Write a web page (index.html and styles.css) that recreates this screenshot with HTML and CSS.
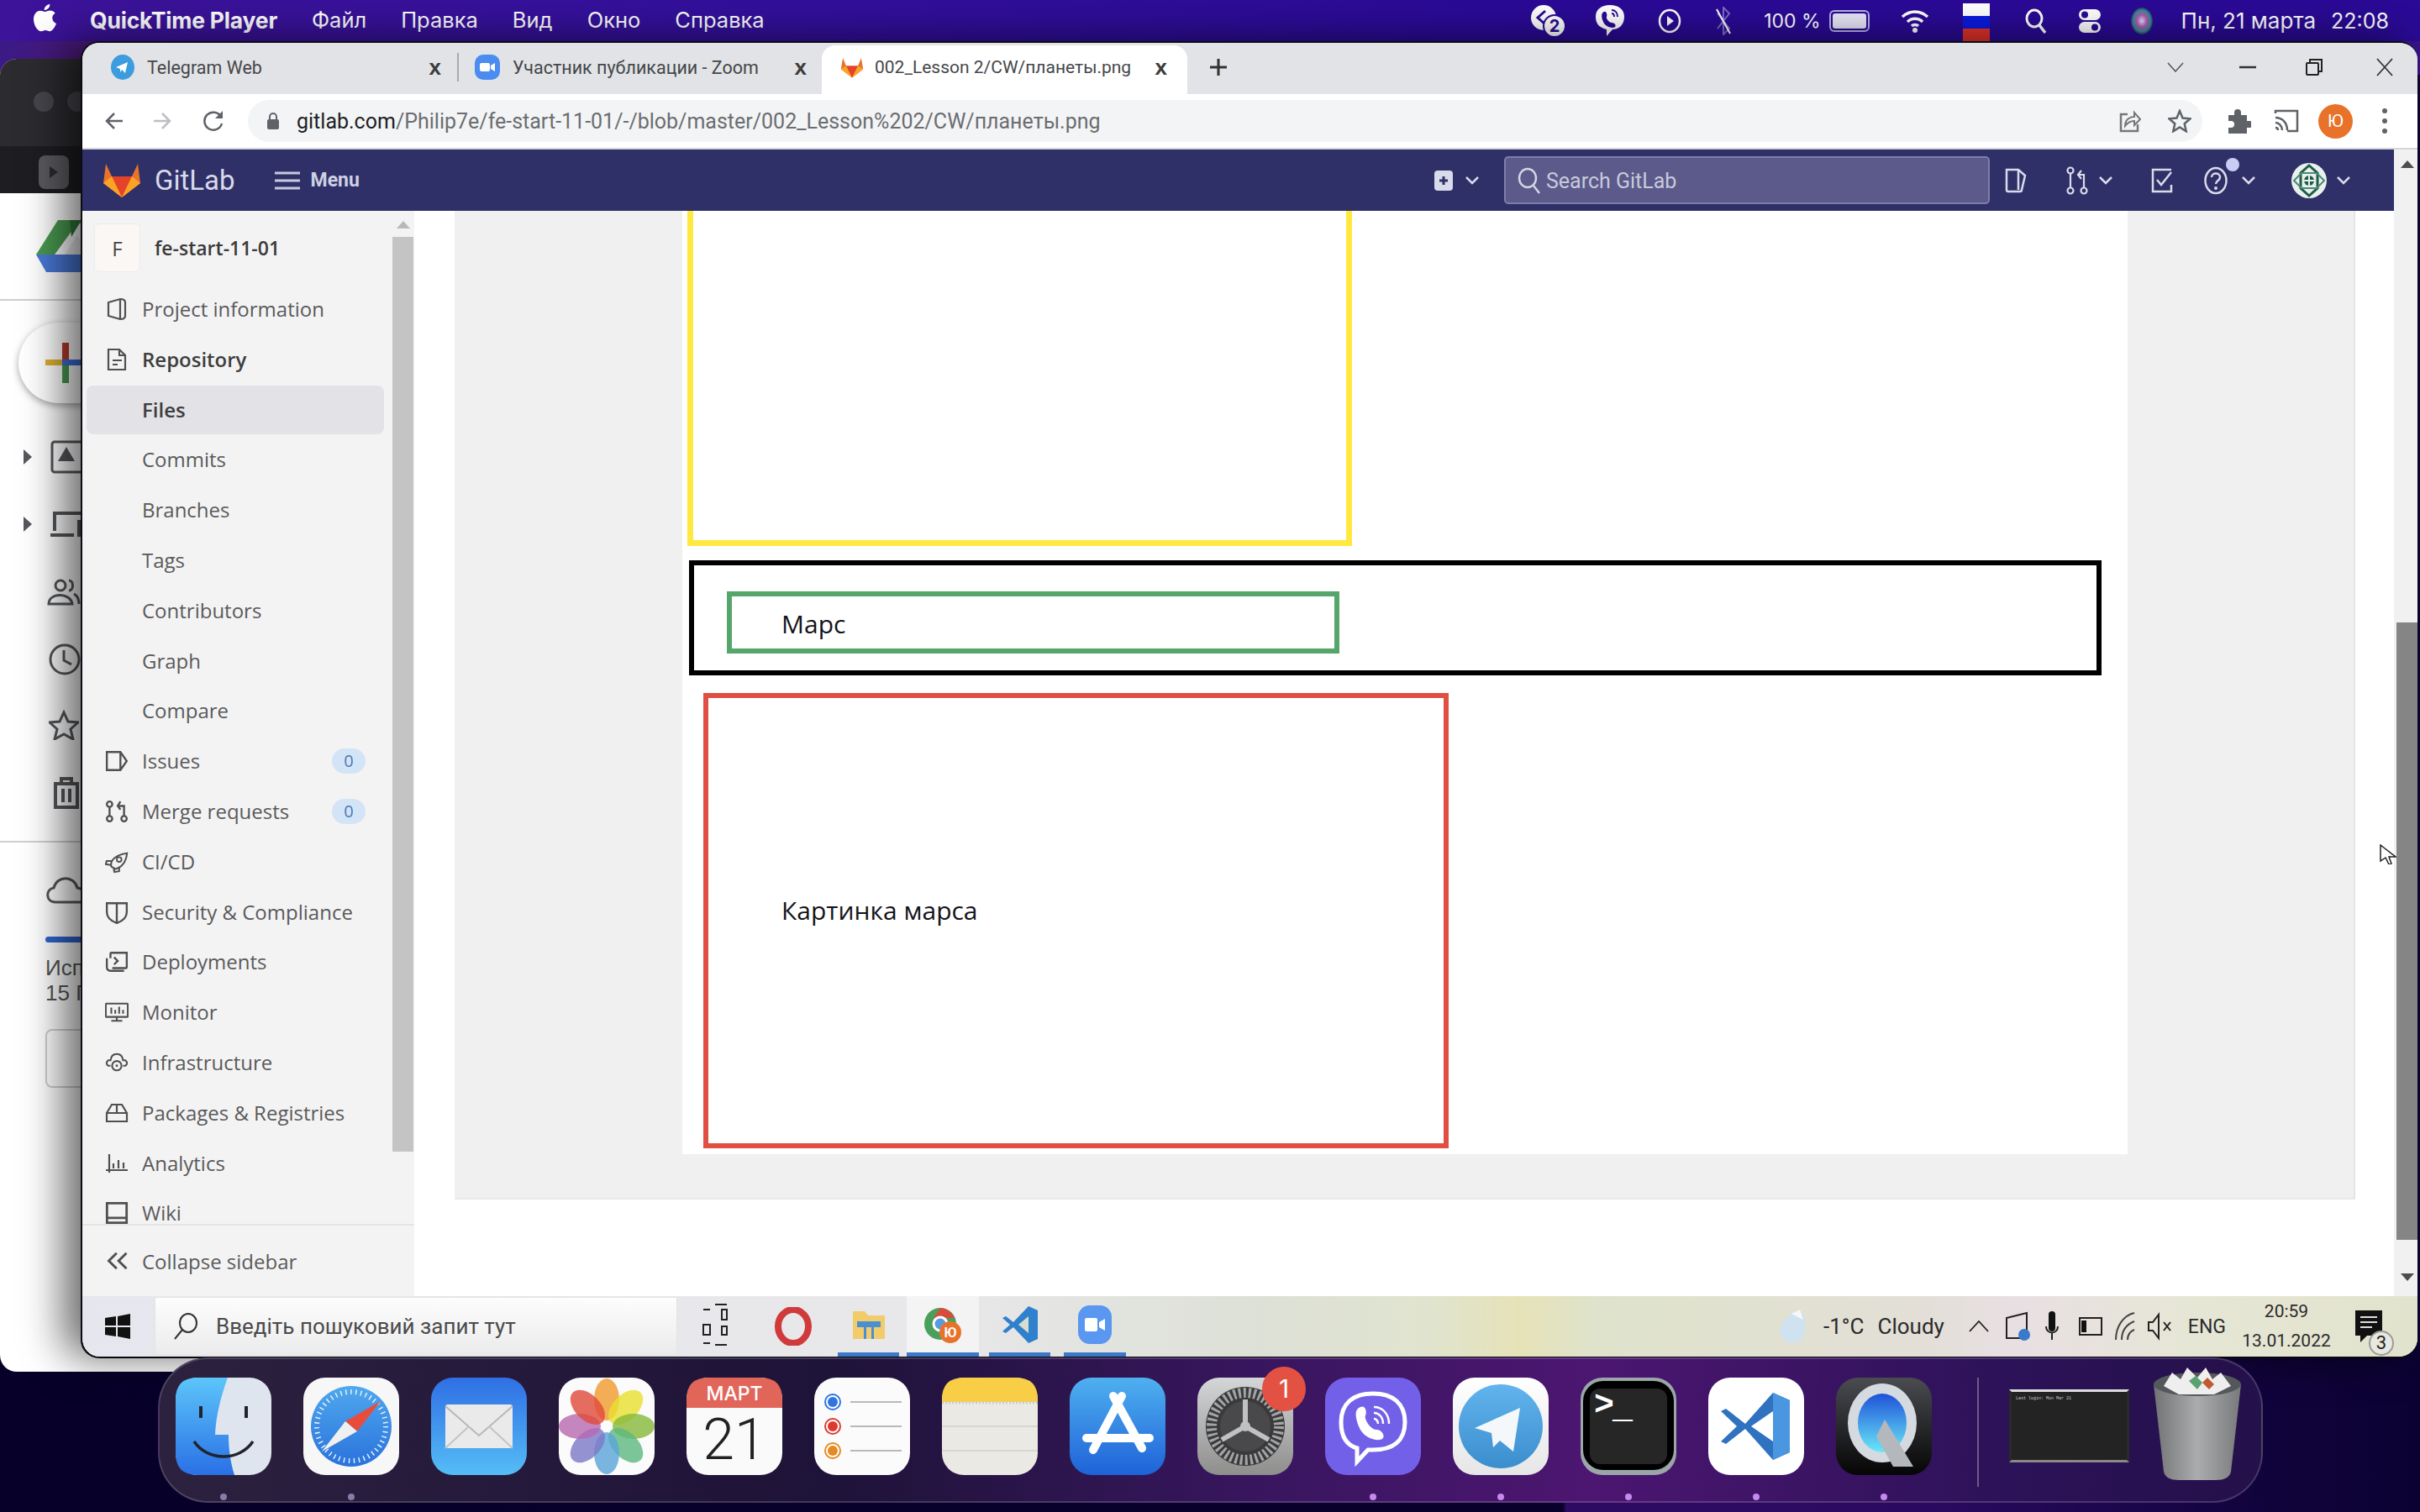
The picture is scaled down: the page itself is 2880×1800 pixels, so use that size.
FILE: index.html
```html
<!DOCTYPE html>
<html lang="en">
<head>
    <meta charset="UTF-8">
    <title>GitLab - QuickTime</title>
    <link rel="stylesheet" href="styles.css">
</head>
<body>

    <div class="menubar">
        <svg class="apple" viewBox="0 0 28 34"><path d="M20 0c.4 3.500-2.800 7.500-6.800 7.200C12.800 3.800 16.200.4 20 0zM14 9.200c1.800 0 3.600-1.500 6.400-1.500 2.300 0 4.700 1.200 6.200 3.400-5.300 3-4.400 10.500 1.400 12.700-1.500 4-4.700 9.600-8 9.600-2 0-3-1.300-5.300-1.300s-3.500 1.300-5.400 1.300C4.700 33.400 0 25.500 0 18.500 0 12 4 8 8.200 8c2.500 0 4.200 1.200 5.800 1.200z" fill="#fff"/></svg>
        <span class="menu-app">QuickTime Player</span>
        <span class="menu-item">Файл</span>
        <span class="menu-item">Правка</span>
        <span class="menu-item">Вид</span>
        <span class="menu-item">Окно</span>
        <span class="menu-item">Справка</span>

        <div class="menu-right">
            <svg class="st-group" width="44" height="40" viewBox="0 0 44 40"><circle cx="17" cy="16" r="15" fill="#fff"/><path d="M19 8l-9 8 9 8" stroke="#2a0a96" stroke-width="3" fill="none"/><circle cx="30" cy="26" r="13" fill="#fff" stroke="#2a0a96" stroke-width="2"/><text x="30" y="33" class="st-num">2</text></svg>
            <svg class="st-viber" width="36" height="40" viewBox="0 0 36 40"><path d="M18 1c10 0 17 5 17 14s-6 15-14 15l-7 8v-8C6 28 1 24 1 15 1 6 8 1 18 1z" fill="#fff"/><path d="M11 9c3-1 4 4 3 6s3 7 6 7 6 3 4 5-11 1-14-6-2-11 1-12z" fill="#2a0a96"/><path d="M20 7c4 0 7 3 7 8M20 11c2 0 3 2 3 4" stroke="#2a0a96" stroke-width="2" fill="none"/></svg>
            <svg class="st-play" width="28" height="40" viewBox="0 0 28 40"><ellipse cx="14" cy="20" rx="12" ry="13" fill="none" stroke="#fff" stroke-width="2.500"/><path d="M11 14l8 6-8 6z" fill="#fff"/></svg>
            <svg class="st-bt" width="22" height="34" viewBox="0 0 22 34"><path d="M4 8l14 18-7 7V1l7 7L4 26" fill="none" stroke="#7b6cc4" stroke-width="2"/><path d="M3 3l16 29" stroke="#fff" stroke-width="2"/></svg>
            <span class="st-percent">100 %</span>
            <div class="st-battery"><div class="st-battery-fill"></div></div>
            <svg class="st-wifi" width="34" height="28" viewBox="0 0 34 28"><path d="M2 9c9-8 21-8 30 0M8 15c5-5 13-5 18 0M13 20c2-2 6-2 8 0" fill="none" stroke="#fff" stroke-width="3.500"/><circle cx="17" cy="25" r="3" fill="#fff"/></svg>
            <div class="st-flag"><i class="flag-w"></i><i class="flag-b"></i><i class="flag-r"></i></div>
            <svg class="st-search" width="28" height="30" viewBox="0 0 28 30"><ellipse cx="12" cy="12" rx="9" ry="10" fill="none" stroke="#fff" stroke-width="3"/><path d="M18 20l7 9" stroke="#fff" stroke-width="3.500"/></svg>
            <svg class="st-control" width="28" height="30" viewBox="0 0 28 30"><rect x="1" y="1" width="26" height="13" rx="6.500" fill="#fff"/><circle cx="8" cy="7.500" r="4" fill="#2a0a96"/><rect x="1" y="16" width="26" height="13" rx="6.500" fill="#fff"/><circle cx="20" cy="22.500" r="4" fill="#2a0a96"/></svg>
            <svg class="st-siri" width="28" height="34" viewBox="0 0 28 34"><defs><radialGradient id="siri"><stop offset="0" stop-color="#e0e0ff"/><stop offset=".45" stop-color="#b05ab0"/><stop offset=".8" stop-color="#3a8a9a"/><stop offset="1" stop-color="#2a3a6a"/></radialGradient></defs><ellipse cx="14" cy="17" rx="13" ry="16" fill="url(#siri)"/></svg>
            <span class="st-date">Пн, 21 марта</span>
            <span class="st-time">22:08</span>
        </div>
    </div>

    <div class="drive-window">
        <div class="drive-title">
            <i class="light"></i><i class="light"></i>
        </div>
        <div class="drive-tabbar">
            <div class="drive-qt"><i></i></div>
        </div>
        <div class="drive-body">
            <svg class="drive-logo" width="100" height="62" viewBox="0 0 100 62"><path d="M50 0h24l26 41H74z" fill="#e0a82c"/><path d="M26 0h26L22 41H0z" fill="#4a9a50"/><path d="M40 0h14L42 20z" fill="#2f7a3c"/><path d="M0 41h100l-12 21H12z" fill="#4a78d8"/><path d="M34 41h30L49 18z" fill="#eee"/></svg>
            <div class="drive-sep"></div>
            <div class="drive-new">
                <svg width="60" height="48" viewBox="0 0 60 48"><path d="M20 0h8v20h-8z" fill="#b83a2c"/><path d="M0 20h20v7H0z" fill="#e0b030"/><path d="M20 20h40v7H20z" fill="#3d6fd8"/><path d="M20 27h8v21h-8z" fill="#4a9a50"/></svg>
            </div>
            <div class="drive-row">
                <svg class="drive-arrow" width="10" height="18" viewBox="0 0 10 18"><path d="M0 0l10 9-10 9z" fill="#55585c"/></svg>
                <svg class="drive-icon" width="42" height="40" viewBox="0 0 42 40"><rect x="2" y="2" width="50" height="36" rx="3" fill="none" stroke="#55585c" stroke-width="3"/><path d="M19 8l10 17H9z" fill="#55585c"/></svg>
            </div>
            <div class="drive-row drive-row-laptop">
                <svg class="drive-arrow" width="10" height="18" viewBox="0 0 10 18"><path d="M0 0l10 9-10 9z" fill="#55585c"/></svg>
                <svg class="drive-icon" width="42" height="32" viewBox="0 0 42 32"><path d="M5 24V3h34M0 29h28M34 13h12v16H34z" fill="none" stroke="#55585c" stroke-width="4"/></svg>
            </div>
            <svg class="drive-plain drive-people" width="40" height="32" viewBox="0 0 40 32"><circle cx="16" cy="8" r="6" fill="none" stroke="#55585c" stroke-width="3"/><path d="M2 30c0-14 26-14 28 0z" fill="none" stroke="#55585c" stroke-width="3"/><path d="M26 2c6 0 6 12 0 12M32 18c4 2 6 6 6 12" fill="none" stroke="#55585c" stroke-width="3"/></svg>
            <svg class="drive-plain drive-clock" width="42" height="38" viewBox="0 0 42 38"><circle cx="19" cy="19" r="17" fill="none" stroke="#55585c" stroke-width="3"/><path d="M18 8v12l9 5" fill="none" stroke="#55585c" stroke-width="3"/></svg>
            <svg class="drive-plain drive-star" width="36" height="36" viewBox="0 0 36 36"><path d="M18 3l5 11 12 1-9 8 3 12-11-6-11 6 3-12-9-8 12-1z" fill="none" stroke="#55585c" stroke-width="3"/></svg>
            <svg class="drive-plain drive-trash" width="32" height="38" viewBox="0 0 32 38"><path d="M1 8h30M10 8V2h12v6M3 8v28h26V8M12 14v16M20 14v16" fill="none" stroke="#55585c" stroke-width="4"/></svg>
            <div class="drive-sep drive-sep2"></div>
            <svg class="drive-plain drive-cloud" width="42" height="34" viewBox="0 0 42 34"><path d="M12 32C0 32 0 16 10 15 14 0 34 0 38 15c8 1 12 8 10 17z" fill="none" stroke="#55585c" stroke-width="3"/></svg>
            <div class="drive-bar"></div>
            <div class="drive-usage">Исп<br>15 Г</div>
            <div class="drive-btn"></div>
        </div>
    </div>

    <div class="browser">
        <div class="tabstrip">
            <div class="tab tab-first">
                <svg class="fav" width="28" height="30" viewBox="0 0 28 30"><ellipse cx="14" cy="15" rx="14" ry="15" fill="#3d9be0"/><path d="M6 15l14-6-3 13-4-4-2 3v-4z" fill="#fff"/></svg>
                <span class="tab-title">Telegram Web</span>
                <span class="tab-x">x</span>
            </div>
            <div class="tab tab-second">
                <svg class="fav" width="30" height="30" viewBox="0 0 30 30"><rect width="30" height="30" rx="10" fill="#4a8cf0"/><rect x="6" y="10" width="12" height="10" rx="2" fill="#fff"/><path d="M19 13l5-3v10l-5-3z" fill="#fff"/></svg>
                <span class="tab-title">Участник публикации - Zoom</span>
                <span class="tab-x">x</span>
            </div>
            <div class="tab tab-active">
                <svg class="fav" width="28" height="28" viewBox="0 0 36 34"><path d="M18 33L1 20l3-17 5 12h18l5-12 3 17z" fill="#e8742c"/><path d="M18 33L9 15h18z" fill="#e24329"/><path d="M1 20l8-5 9 18zM35 20l-8-5-9 18z" fill="#fca326"/></svg>
                <span class="tab-title tab-title-active">002_Lesson 2/CW/планеты.png</span>
                <span class="tab-x">x</span>
            </div>
            <svg class="tab-plus" width="24" height="24" viewBox="0 0 24 24"><path d="M12 2v20M2 12h20" stroke="#333" stroke-width="3"/></svg>
            <div class="win-controls">
                <svg class="win-chevron" width="20" height="12" viewBox="0 0 20 12"><path d="M1 1l9 10 9-10" fill="none" stroke="#555" stroke-width="1.500"/></svg>
                <svg class="win-min" width="20" height="4" viewBox="0 0 20 4"><path d="M0 2h20" stroke="#333" stroke-width="2.500"/></svg>
                <svg class="win-restore" width="20" height="20" viewBox="0 0 20 20"><rect x="1" y="5" width="14" height="14" rx="1" fill="none" stroke="#222" stroke-width="2"/><path d="M5 5V1h14v14h-4" fill="none" stroke="#222" stroke-width="2"/></svg>
                <svg class="win-close" width="22" height="22" viewBox="0 0 22 22"><path d="M2 1l18 20M20 1L2 21" stroke="#333" stroke-width="1.800"/></svg>
            </div>
        </div>

        <div class="toolbar">
            <svg class="tb-back" width="22" height="22" viewBox="0 0 22 22"><path d="M21 11H3M11 2l-9 9 9 9" fill="none" stroke="#5f6368" stroke-width="2.500"/></svg>
            <svg class="tb-forward" width="22" height="22" viewBox="0 0 22 22"><path d="M1 11h18M11 2l9 9-9 9" fill="none" stroke="#bcbec2" stroke-width="2.500"/></svg>
            <svg class="tb-reload" width="26" height="26" viewBox="0 0 26 26"><path d="M22 8a10.500 10.500 0 1 0 1 8" fill="none" stroke="#5f6368" stroke-width="2.500"/><path d="M24 1v9h-9z" fill="#5f6368"/></svg>
            <div class="omnibox">
                <svg class="lock" width="14" height="20" viewBox="0 0 14 20"><rect y="8" width="14" height="12" rx="2" fill="#5f6368"/><path d="M3 9V5a4 4 0 0 1 8 0v4" fill="none" stroke="#5f6368" stroke-width="2"/></svg>
                <span class="url"><b class="url-host">gitlab.com</b>/Philip7e/fe-start-11-01/-/blob/master/002_Lesson%202/CW/планеты.png</span>
                <svg class="om-share" width="26" height="30" viewBox="0 0 26 30"><path d="M10 7H2v20h20v-8" fill="none" stroke="#777" stroke-width="2.500"/><path d="M7 21c0-8 6-11 11-11V5l7 8-7 7v-5c-5 0-8 2-11 6z" fill="none" stroke="#777" stroke-width="2"/></svg>
                <svg class="om-star" width="28" height="28" viewBox="0 0 28 28"><path d="M14 2l3.500 8.500 9 .8-6.800 6 2 9L14 21.500 6.300 26.300l2-9-6.800-6 9-.8z" fill="none" stroke="#5f6368" stroke-width="2.500"/></svg>
            </div>
            <svg class="tb-ext" width="30" height="30" viewBox="0 0 30 30"><path d="M3 8h7V5a4 4 0 0 1 8 0v3h7v7h3a4 4 0 0 1 0 8h-3v7H3v-7h3a4 4 0 0 0 0-8H3z" fill="#5f6368"/></svg>
            <svg class="tb-cast" width="30" height="28" viewBox="0 0 30 28"><path d="M2 5V2h26v24H16" fill="none" stroke="#5f6368" stroke-width="2.500"/><path d="M2 10c8 0 14 6 14 15M2 16c4 0 8 4 8 9M2 22c2 0 3 1 3 3" fill="none" stroke="#5f6368" stroke-width="2.500"/></svg>
            <div class="tb-avatar">Ю</div>
            <div class="tb-dots"><i></i><i></i><i></i></div>
        </div>

        <div class="page">
            <div class="page-main">
                <div class="gl-nav">
                    <svg class="gl-logo" width="46" height="42" viewBox="0 0 46 42"><path d="M23 41L1 24 4 1l7 15h24l7-15 3 23z" fill="#e8742c"/><path d="M23 41L11 16h24z" fill="#e24329"/><path d="M1 24l10-8 12 25zM45 24l-10-8-12 25z" fill="#fca326"/></svg>
                    <span class="gl-name">GitLab</span>
                    <svg class="gl-burger" width="30" height="22" viewBox="0 0 30 22"><path d="M0 2h30M0 11h30M0 20h30" stroke="#c8c9dd" stroke-width="3"/></svg>
                    <span class="gl-menu">Menu</span>

                    <div class="gl-right">
                        <svg class="gl-add" width="22" height="24" viewBox="0 0 22 24"><rect width="22" height="24" rx="4" fill="#d9daea"/><path d="M11 7v10M6 12h10" stroke="#2f3068" stroke-width="3"/></svg>
                        <svg class="gl-chev gl-chev-add" width="16" height="10" viewBox="0 0 16 10"><path d="M1 1l7 7 7-7" fill="none" stroke="#d9daea" stroke-width="2.500"/></svg>
                        <div class="gl-search">
                            <svg width="28" height="32" viewBox="0 0 28 32"><ellipse cx="12" cy="13" rx="10" ry="11" fill="none" stroke="#d5d5e4" stroke-width="2.500"/><path d="M19 22l7 9" stroke="#d5d5e4" stroke-width="2.500"/></svg>
                            <span>Search GitLab</span>
                        </div>
                        <svg class="gl-issues" width="26" height="32" viewBox="0 0 26 32"><path d="M2 3h14l8 7-4 17q0 2-2 2H4q-2 0-2-2z" fill="none" stroke="#d9daea" stroke-width="2.500"/><path d="M16 3v24" stroke="#d9daea" stroke-width="2.500"/></svg>
                        <svg class="gl-mr" width="26" height="34" viewBox="0 0 26 34"><circle cx="5" cy="5" r="3.500" fill="none" stroke="#d9daea" stroke-width="2.200"/><circle cx="5" cy="29" r="3.500" fill="none" stroke="#d9daea" stroke-width="2.200"/><circle cx="21" cy="29" r="3.500" fill="none" stroke="#d9daea" stroke-width="2.200"/><path d="M5 9v16M21 25V10h-6M18 5l-4 5 4 5" fill="none" stroke="#d9daea" stroke-width="2.200"/></svg>
                        <svg class="gl-chev gl-chev-mr" width="16" height="10" viewBox="0 0 16 10"><path d="M1 1l7 7 7-7" fill="none" stroke="#d9daea" stroke-width="2.500"/></svg>
                        <svg class="gl-todo" width="26" height="32" viewBox="0 0 26 32"><path d="M24 3H2v26h22v-8" fill="none" stroke="#d9daea" stroke-width="2.500"/><path d="M7 15l5 6 12-15" fill="none" stroke="#d9daea" stroke-width="2.500"/></svg>
                        <div class="gl-help">
                            <svg width="28" height="36" viewBox="0 0 28 36"><ellipse cx="14" cy="18" rx="12.500" ry="15" fill="none" stroke="#d9daea" stroke-width="2.500"/><path d="M9 14c0-6 10-6 10 0 0 4-5 4-5 8" fill="none" stroke="#d9daea" stroke-width="2.500"/><circle cx="14" cy="27" r="2" fill="#d9daea"/></svg>
                            <i class="gl-help-dot"></i>
                        </div>
                        <svg class="gl-chev gl-chev-help" width="16" height="10" viewBox="0 0 16 10"><path d="M1 1l7 7 7-7" fill="none" stroke="#d9daea" stroke-width="2.500"/></svg>
                        <svg class="gl-avatar" width="42" height="42" viewBox="0 0 42 42"><circle cx="21" cy="21" r="21" fill="#eaf1ec"/><path d="M21 3l10 9v18l-10 9-10-9V12z" fill="none" stroke="#1f5c48" stroke-width="3"/><path d="M3 21l9-9h18l9 9-9 9H12z" fill="none" stroke="#4a8a78" stroke-width="2"/><circle cx="21" cy="21" r="6" fill="#1f5c48"/><path d="M21 15v12M15 21h12" stroke="#eaf1ec" stroke-width="2"/></svg>
                        <svg class="gl-chev gl-chev-user" width="16" height="10" viewBox="0 0 16 10"><path d="M1 1l7 7 7-7" fill="none" stroke="#d9daea" stroke-width="2.500"/></svg>
                    </div>
                </div>

                <div class="gl-body">
                    <div class="sidebar">
                        <div class="side-scroll">
                            <div class="side-nav">
                                <div class="side-project">
                                    <div class="project-avatar">F</div>
                                    <span class="project-name">fe-start-11-01</span>
                                </div>
                                <ul class="side-list">
                                    <li class="side-item">
                                        <svg class="side-icon" viewBox="0 0 24 28"><path d="M2 6l14-4q6 0 6 4v16q0 4-6 4L2 22zM16 2v24" fill="none" stroke="#505050" stroke-width="2.200"/></svg>
                                        <span>Project information</span>
                                    </li>
                                    <li class="side-item side-bold">
                                        <svg class="side-icon" viewBox="0 0 24 28"><path d="M2 2h13l7 7v17H2zM15 2v7h7M7 15h11M7 20h6" fill="none" stroke="#505050" stroke-width="2.200"/></svg>
                                        <span>Repository</span>
                                    </li>
                                    <li class="side-item side-bold side-active"><span>Files</span></li>
                                    <li class="side-item"><span>Commits</span></li>
                                    <li class="side-item"><span>Branches</span></li>
                                    <li class="side-item"><span>Tags</span></li>
                                    <li class="side-item"><span>Contributors</span></li>
                                    <li class="side-item"><span>Graph</span></li>
                                    <li class="side-item"><span>Compare</span></li>
                                    <li class="side-item">
                                        <svg class="side-icon" viewBox="0 0 26 24"><path d="M2 2h15l7 10-7 10H2zM17 2v20" fill="none" stroke="#505050" stroke-width="2.200"/></svg>
                                        <span>Issues</span>
                                        <em class="side-count">0</em>
                                    </li>
                                    <li class="side-item">
                                        <svg class="side-icon" viewBox="0 0 26 26"><circle cx="5" cy="5" r="3" fill="none" stroke="#505050" stroke-width="2.200"/><circle cx="5" cy="21" r="3" fill="none" stroke="#505050" stroke-width="2.200"/><circle cx="21" cy="21" r="3" fill="none" stroke="#505050" stroke-width="2.200"/><path d="M5 8v10M21 18V7h-6M17 2l-3 5 3 4" fill="none" stroke="#505050" stroke-width="2.200"/></svg>
                                        <span>Merge requests</span>
                                        <em class="side-count">0</em>
                                    </li>
                                    <li class="side-item">
                                        <svg class="side-icon" viewBox="0 0 30 28"><path d="M8 20c-2-8 6-15 20-17-1 12-8 19-15 20zM8 13H2l-1 4 6 1M18 20v6l-6 1-1-4" fill="none" stroke="#505050" stroke-width="2.200"/><circle cx="18" cy="11" r="3" fill="none" stroke="#505050" stroke-width="2"/></svg>
                                        <span>CI/CD</span>
                                    </li>
                                    <li class="side-item">
                                        <svg class="side-icon" viewBox="0 0 26 26"><path d="M2 3h22v10q0 8-11 12Q2 21 2 13zM13 3v22" fill="none" stroke="#505050" stroke-width="2.200"/></svg>
                                        <span>Security &amp; Compliance</span>
                                    </li>
                                    <li class="side-item">
                                        <svg class="side-icon" viewBox="0 0 26 24"><path d="M6 8V3q0-1 1-1h17v16q0 1-1 1H8M2 8v10q0 4 5 4h14" fill="none" stroke="#505050" stroke-width="2.200"/><path d="M10 7l4 4-4 4" fill="none" stroke="#505050" stroke-width="2.200"/></svg>
                                        <span>Deployments</span>
                                    </li>
                                    <li class="side-item">
                                        <svg class="side-icon" viewBox="0 0 30 26"><rect x="1" y="2" width="28" height="17" rx="1" fill="none" stroke="#505050" stroke-width="2.200"/><path d="M8 24h14M15 19v5M8 7v8M13 10v5M18 6v9M23 10v5" fill="none" stroke="#505050" stroke-width="2.200"/></svg>
                                        <span>Monitor</span>
                                    </li>
                                    <li class="side-item">
                                        <svg class="side-icon" viewBox="0 0 30 26"><path d="M7 17H4q-4-3 0-7h3Q8 2 15 2t8 8h3q4 4 0 7h-3" fill="none" stroke="#505050" stroke-width="2.200"/><circle cx="15" cy="17" r="6" fill="none" stroke="#505050" stroke-width="2.200"/><circle cx="15" cy="17" r="1.500" fill="#505050"/></svg>
                                        <span>Infrastructure</span>
                                    </li>
                                    <li class="side-item">
                                        <svg class="side-icon" viewBox="0 0 28 24"><path d="M2 12L8 2h12l6 10v10H2zM2 12h24M14 2v10" fill="none" stroke="#505050" stroke-width="2.200"/></svg>
                                        <span>Packages &amp; Registries</span>
                                    </li>
                                    <li class="side-item">
                                        <svg class="side-icon" viewBox="0 0 28 24"><path d="M5 1v22M1 20h26M10 12v6M16 8v10M22 11v7" fill="none" stroke="#505050" stroke-width="2.200"/></svg>
                                        <span>Analytics</span>
                                    </li>
                                    <li class="side-item">
                                        <svg class="side-icon" viewBox="0 0 24 24"><path d="M2 22V2h20v20zM2 17h20" fill="none" stroke="#505050" stroke-width="2.400"/></svg>
                                        <span>Wiki</span>
                                    </li>
                                </ul>
                            </div>
                            <div class="side-track">
                                <i class="arrow-up"></i>
                                <div class="side-thumb"></div>
                            </div>
                        </div>
                        <div class="side-collapse">
                            <svg class="side-icon" viewBox="0 0 24 20"><path d="M11 2L3 10l8 8M21 2l-8 8 8 8" fill="none" stroke="#505050" stroke-width="2.500"/></svg>
                            <span>Collapse sidebar</span>
                        </div>
                    </div>

                    <div class="content">
                        <div class="file-holder">
                            <div class="file-image">
                                <div class="box-yellow"></div>
                                <div class="box-black">
                                    <div class="box-green"><span class="draw-text">Марс</span></div>
                                </div>
                                <div class="box-red"><span class="draw-text">Картинка марса</span></div>
                            </div>
                        </div>
                    </div>
                </div>
            </div>

            <div class="page-scroll">
                <i class="arrow-up"></i>
                <div class="page-thumb"></div>
                <i class="arrow-down"></i>
            </div>
        </div>

        <div class="taskbar">
            <div class="start">
                <svg width="30" height="30" viewBox="0 0 30 30"><path d="M0 5l13-2v11H0zM15 3l15-3v14H15zM0 16h13v11L0 25zM15 16h15v14l-15-3z" fill="#111"/></svg>
            </div>
            <div class="task-search">
                <svg width="30" height="32" viewBox="0 0 30 32"><ellipse cx="18" cy="12" rx="10" ry="11" fill="none" stroke="#333" stroke-width="2"/><path d="M11 20L2 31" stroke="#333" stroke-width="2"/></svg>
                <span>Введіть пошуковий запит тут</span>
            </div>
            <svg class="task-view" width="32" height="56" viewBox="0 0 32 56"><path d="M2 8h8M2 26h8v12H2zM2 48h8M16 2h14M16 50h14M24 8v12h6V8zM24 28h6v10h-6z" fill="none" stroke="#222" stroke-width="2"/></svg>
            <svg class="task-opera" width="44" height="46" viewBox="0 0 44 46"><ellipse cx="22" cy="23" rx="18" ry="20" fill="none" stroke="#d03a3a" stroke-width="8"/></svg>
            <div class="task-slot slot-folder">
                <svg width="40" height="36" viewBox="0 0 40 36"><path d="M1 2h14l4 5h20v28H1z" fill="#f2cc6a"/><path d="M6 14h28v7H26v14h-3V21h-6v14h-3V21H6z" fill="#4a90d0"/></svg>
            </div>
            <div class="task-slot slot-chrome">
                <svg width="46" height="46" viewBox="0 0 46 46"><circle cx="20" cy="22" r="19" fill="#4aa05a"/><path d="M20 3a19 19 0 0 1 17 12H12z" fill="#d94c3c"/><circle cx="20" cy="22" r="8" fill="#5a9ae0" stroke="#fff" stroke-width="3"/><circle cx="32" cy="32" r="13" fill="#e8722a"/><text x="32" y="38" class="task-ch-text">Ю</text></svg>
            </div>
            <div class="task-slot slot-vs">
                <svg width="44" height="46" viewBox="0 0 44 46"><path d="M32 1L14 20 5 13 1 15l9 8-9 8 4 2 9-7 18 19 11-5V6z" fill="#2f80cd"/><path d="M32 13L20 23l12 10z" fill="#d9ddd0"/></svg>
            </div>
            <div class="task-slot slot-zoom">
                <svg width="40" height="46" viewBox="0 0 40 46"><rect width="40" height="46" rx="14" fill="#5a97f0"/><rect x="8" y="15" width="15" height="16" rx="2" fill="#fff"/><path d="M25 20l7-4v14l-7-4z" fill="#fff"/></svg>
            </div>

            <div class="task-tray">
                <svg class="tray-weather" width="40" height="46" viewBox="0 0 40 46"><path d="M12 40C0 30 8 12 30 3c8 12 10 26 0 37-6 3-12 3-18 0z" fill="#cfe2ef"/><path d="M20 8l10-5 4 12z" fill="#f4f8fa"/></svg>
                <span class="tray-text tray-temp">-1°C</span>
                <span class="tray-text tray-cloudy">Cloudy</span>
                <svg class="tray-up" width="24" height="14" viewBox="0 0 24 14"><path d="M1 13L12 1l11 12" fill="none" stroke="#222" stroke-width="1.800"/></svg>
                <svg class="tray-meet" width="30" height="36" viewBox="0 0 30 36"><path d="M2 8l24-6v30H2z" fill="none" stroke="#222" stroke-width="2"/><circle cx="23" cy="28" r="7" fill="#3a7ac8"/></svg>
                <svg class="tray-mic" width="18" height="36" viewBox="0 0 18 36"><rect x="5" y="0" width="8" height="24" rx="4" fill="#111"/><path d="M2 18c0 10 14 10 14 0M9 26v8" fill="none" stroke="#222" stroke-width="2"/></svg>
                <svg class="tray-batt" width="28" height="22" viewBox="0 0 28 22"><rect x="1" y="1" width="26" height="20" fill="none" stroke="#222" stroke-width="2"/><rect x="3" y="4" width="6" height="14" fill="#111"/></svg>
                <svg class="tray-wifi" width="24" height="36" viewBox="0 0 24 36"><path d="M1 34C1 18 10 5 23 2M8 34c0-10 5-18 15-22M15 34c0-6 3-10 8-12" fill="none" stroke="#444" stroke-width="2"/></svg>
                <svg class="tray-sound" width="28" height="34" viewBox="0 0 28 34"><path d="M1 12h5l7-9v28l-7-9H1zM19 12l8 10M27 12l-8 10" fill="none" stroke="#222" stroke-width="2"/></svg>
                <span class="tray-text tray-eng">ENG</span>
                <div class="tray-clock"><span>20:59</span><span>13.01.2022</span></div>
                <div class="tray-note">
                    <svg width="32" height="38" viewBox="0 0 32 38"><path d="M0 0h32v30H14l-8 8v-8H0z" fill="#111"/><path d="M6 8h20M6 14h20M6 20h14" stroke="#ddd" stroke-width="2"/></svg>
                    <span class="tray-badge">3</span>
                </div>
            </div>
        </div>
    </div>

    <div class="dock">
        <div class="dock-item">
            <svg class="dock-icon" viewBox="0 0 114 116"><defs><linearGradient id="finderL" x1="0" y1="0" x2="0" y2="1"><stop offset="0" stop-color="#5cc5fa"/><stop offset="1" stop-color="#2a70e6"/></linearGradient></defs><rect width="114" height="116" rx="26" fill="#dfe5ee"/><path d="M26 0h36c-8 22-14 45-15 68h16c0 16 2 32 7 48H26Q0 116 0 90V26Q0 0 26 0z" fill="url(#finderL)"/><path d="M30 34v14M84 34v14" stroke="#20242c" stroke-width="4"/><path d="M22 76c16 24 54 24 70 0" fill="none" stroke="#20242c" stroke-width="3.500"/></svg>
            <i class="dock-dot dim"></i>
        </div>
        <div class="dock-item">
            <svg class="dock-icon" viewBox="0 0 114 116"><defs><linearGradient id="safariB" x1="0" y1="0" x2="0" y2="1"><stop offset="0" stop-color="#4fa8ee"/><stop offset="1" stop-color="#2a72dc"/></linearGradient></defs><rect width="114" height="116" rx="26" fill="#f7f7f7"/><circle cx="57" cy="58" r="48" fill="url(#safariB)"/><circle cx="57" cy="58" r="41" fill="none" stroke="#e4f0fb" stroke-width="6" stroke-dasharray="1.500 4.500"/><path d="M92 28L50 52l14 12z" fill="#e84d3c"/><path d="M22 88l42-24-14-12z" fill="#f0f0f0"/></svg>
            <i class="dock-dot dim"></i>
        </div>
        <div class="dock-item">
            <svg class="dock-icon" viewBox="0 0 114 116"><defs><linearGradient id="mailB" x1="0" y1="0" x2="0" y2="1"><stop offset="0" stop-color="#2f6fe4"/><stop offset="1" stop-color="#55bdf6"/></linearGradient></defs><rect width="114" height="116" rx="26" fill="url(#mailB)"/><rect x="17" y="32" width="80" height="52" rx="3" fill="#eaeaea"/><path d="M17 34l40 35 40-35" fill="none" stroke="#b8b8b8" stroke-width="2"/><path d="M17 84l28-26M97 84L69 58" stroke="#c4c4c4" stroke-width="2"/></svg>
            <i class="dock-dot none"></i>
        </div>
        <div class="dock-item">
            <svg class="dock-icon" viewBox="0 0 114 116"><rect width="114" height="116" rx="26" fill="#fbfbfb"/><g transform="translate(57 58)"><ellipse cx="0" cy="-32" rx="15" ry="25" fill="#f09a2c" opacity=".8"/><ellipse cx="0" cy="-32" rx="15" ry="25" fill="#e8e030" opacity=".8" transform="rotate(45)"/><ellipse cx="0" cy="-32" rx="15" ry="25" fill="#86b83a" opacity=".8" transform="rotate(90)"/><ellipse cx="0" cy="-32" rx="15" ry="25" fill="#5cb880" opacity=".8" transform="rotate(135)"/><ellipse cx="0" cy="-32" rx="15" ry="25" fill="#5aa4d8" opacity=".8" transform="rotate(180)"/><ellipse cx="0" cy="-32" rx="15" ry="25" fill="#7c78c8" opacity=".8" transform="rotate(225)"/><ellipse cx="0" cy="-32" rx="15" ry="25" fill="#b868b0" opacity=".8" transform="rotate(270)"/><ellipse cx="0" cy="-32" rx="15" ry="25" fill="#e04a38" opacity=".8" transform="rotate(315)"/></g></svg>
            <i class="dock-dot none"></i>
        </div>
        <div class="dock-item">
            <svg class="dock-icon" viewBox="0 0 114 116"><rect width="114" height="116" rx="26" fill="#fafafa"/><path d="M0 36V26Q0 0 26 0h62q26 0 26 26v10z" fill="#e2655a"/><text x="57" y="27" class="cal-month">МАРТ</text><text x="57" y="97" class="cal-day">21</text></svg>
            <i class="dock-dot none"></i>
        </div>
        <div class="dock-item">
            <svg class="dock-icon" viewBox="0 0 114 116"><rect width="114" height="116" rx="26" fill="#fbfbfb"/><circle cx="22" cy="29" r="9" fill="#fff" stroke="#2f74e0" stroke-width="2"/><circle cx="22" cy="29" r="6" fill="#2f74e0"/><circle cx="22" cy="58" r="9" fill="#fff" stroke="#dc3a30" stroke-width="2"/><circle cx="22" cy="58" r="6" fill="#dc3a30"/><circle cx="22" cy="87" r="9" fill="#fff" stroke="#e58a20" stroke-width="2"/><circle cx="22" cy="87" r="6" fill="#e58a20"/><path d="M43 29h61M43 58h61M43 87h61" stroke="#b9b9b9" stroke-width="2"/></svg>
            <i class="dock-dot none"></i>
        </div>
        <div class="dock-item">
            <svg class="dock-icon" viewBox="0 0 114 116"><rect width="114" height="116" rx="26" fill="#ebe9e4"/><path d="M0 29V26Q0 0 26 0h62q26 0 26 26v3z" fill="#f8ce47"/><path d="M0 30h114" stroke="#ccc" stroke-width="3" stroke-dasharray="2 2"/><path d="M0 58h114M0 87h114" stroke="#d8d6d2" stroke-width="2"/></svg>
            <i class="dock-dot none"></i>
        </div>
        <div class="dock-item">
            <svg class="dock-icon" viewBox="0 0 114 116"><defs><linearGradient id="storeB" x1="0" y1="0" x2="0" y2="1"><stop offset="0" stop-color="#4fb0f0"/><stop offset="1" stop-color="#1e62d8"/></linearGradient></defs><rect width="114" height="116" rx="26" fill="url(#storeB)"/><path d="M62 22L28 86M52 22l34 62" stroke="#fff" stroke-width="10" stroke-linecap="round"/><path d="M20 72h75" stroke="#fff" stroke-width="10" stroke-linecap="round"/></svg>
            <i class="dock-dot none"></i>
        </div>
        <div class="dock-item">
            <svg class="dock-icon" viewBox="0 0 114 116"><defs><linearGradient id="gearB" x1="0" y1="0" x2="0" y2="1"><stop offset="0" stop-color="#d4d6d8"/><stop offset="1" stop-color="#8e8e8c"/></linearGradient></defs><rect width="114" height="116" rx="26" fill="url(#gearB)"/><circle cx="57" cy="58" r="47" fill="#3a3a3c"/><circle cx="57" cy="58" r="40" fill="none" stroke="#a2a4a6" stroke-width="12" stroke-dasharray="3 3"/><circle cx="57" cy="58" r="30" fill="#49494b"/><path d="M57 58V26M57 58L29 74M57 58l28 16" stroke="#bfc1c3" stroke-width="6"/><circle cx="57" cy="58" r="6" fill="#bfc1c3"/></svg>
            <span class="dock-badge">1</span>
            <i class="dock-dot none"></i>
        </div>
        <div class="dock-item">
            <svg class="dock-icon" viewBox="0 0 114 116"><rect width="114" height="116" rx="26" fill="#7360e8"/><path d="M57 19c24 0 38 12 38 34s-14 33-38 33h-6L38 100V84C24 80 19 68 19 53c0-22 14-34 38-34z" fill="none" stroke="#fff" stroke-width="5"/><path d="M42 35c6-3 8 6 6 10s6 17 13 17 11 8 7 11-22 1-28-15-3-21 2-23z" fill="#fff"/><path d="M58 35c10 0 18 8 18 20M58 42c6 0 11 5 11 13M58 49c3 0 5 3 5 6" fill="none" stroke="#fff" stroke-width="2.500"/></svg>
            <i class="dock-dot"></i>
        </div>
        <div class="dock-item">
            <svg class="dock-icon" viewBox="0 0 114 116"><defs><linearGradient id="tgB" x1="0" y1="0" x2="0" y2="1"><stop offset="0" stop-color="#62b4ee"/><stop offset="1" stop-color="#3b8ecd"/></linearGradient><linearGradient id="tgW" x1="0" y1="0" x2="0" y2="1"><stop offset="0" stop-color="#fff"/><stop offset="1" stop-color="#e6e6e6"/></linearGradient></defs><rect width="114" height="116" rx="26" fill="url(#tgW)"/><circle cx="57" cy="58" r="50" fill="url(#tgB)"/><path d="M26 60l54-24-8 52-16-13-8 8-2-17z" fill="#f4f8fb"/></svg>
            <i class="dock-dot"></i>
        </div>
        <div class="dock-item">
            <svg class="dock-icon" viewBox="0 0 114 116"><rect width="114" height="116" rx="26" fill="#9aa6a8"/><rect x="3" y="4" width="108" height="106" rx="24" fill="#000"/><rect x="11" y="13" width="92" height="90" rx="12" fill="#262626"/><text x="16" y="44" class="term-text">&gt;</text><text x="38" y="48" class="term-text">_</text></svg>
            <i class="dock-dot"></i>
        </div>
        <div class="dock-item">
            <svg class="dock-icon" viewBox="0 0 114 116"><rect width="114" height="116" rx="26" fill="#fff"/><path d="M77 18L44 55 21 37l-6 3 19 18-19 18 6 3 23-18 33 37 20-9V27z" fill="#2f72c0"/><path d="M77 18l20 9v62l-20 9z" fill="#4a96e0"/><path d="M77 40L51 58l26 18z" fill="#fff"/></svg>
            <i class="dock-dot"></i>
        </div>
        <div class="dock-item">
            <svg class="dock-icon" viewBox="0 0 114 116"><defs><linearGradient id="qtB" x1="0" y1="0" x2="0" y2="1"><stop offset="0" stop-color="#4a4c50"/><stop offset="1" stop-color="#050505"/></linearGradient><linearGradient id="qtC" x1="0" y1="0" x2="0" y2="1"><stop offset="0" stop-color="#1f52d8"/><stop offset="1" stop-color="#6ae8f8"/></linearGradient></defs><rect width="114" height="116" rx="26" fill="url(#qtB)"/><ellipse cx="55" cy="54" rx="41" ry="47" fill="#d5dae0"/><ellipse cx="55" cy="54" rx="29" ry="35" fill="url(#qtC)"/><path d="M58 50l34 56H68L48 70z" fill="#b4b8bc"/></svg>
            <i class="dock-dot"></i>
        </div>
        <div class="dock-divider"></div>
        <div class="dock-thumb"><span>Last login: Mon Mar 21</span></div>
        <svg class="dock-trash" width="104" height="134" viewBox="0 0 104 134"><defs><linearGradient id="trashB" x1="0" y1="0" x2="1" y2="0"><stop offset="0" stop-color="#707274"/><stop offset=".5" stop-color="#aaacae"/><stop offset="1" stop-color="#77797b"/></linearGradient></defs><path d="M0 20h104l-12 104q-2 10-18 10H30q-16 0-18-10z" fill="url(#trashB)"/><ellipse cx="52" cy="20" rx="52" ry="14" fill="#55585a"/><path d="M12 22L22 6l10 8 8-14 12 12L62 0l8 14 10-8 12 16-20 10H30z" fill="#eee"/><path d="M42 16l8-6 8 8-6 8z" fill="#5aa070"/><path d="M58 18l6-6 8 8-6 6z" fill="#c05a30"/></svg>
    </div>

    <svg class="cursor" width="20" height="24" viewBox="0 0 20 24"><path d="M1 1l18 14h-8l3 8-3 1-4-8-6 4z" fill="#fff" stroke="#222" stroke-width="1.500"/></svg>

</body>
</html>
```

FILE: styles.css
```css
* {
    box-sizing: border-box;
}

html, body {
    margin: 0;
    padding: 0;
}

body {
    width: 2880px;
    height: 1800px;
    overflow: hidden;
    position: relative;
    font-family: "Open Sans", sans-serif;
    background:
        linear-gradient(100deg, #3a1a86 0, #4a1a78 100px, #3a148a 200px) 0 49px / 100% 40px no-repeat,
        linear-gradient(90deg, #07012a 0, #09012c 1860px, #2e0b62 1864px, #2a0a60 2300px, #10033c 2700px, #0c0232 100%);
}

i, em {
    display: block;
    font-style: normal;
}

/* mac menu bar */
.menubar {
    height: 49px;
    display: flex;
    align-items: center;
    padding: 0 0 2px 40px;
    color: white;
    font-family: Inter, sans-serif;
    font-size: 25.500px;
    background: linear-gradient(90deg, #3c1399, #34109c 800px, #2a0a96 1800px, #2a0a96);
}

.apple {
    width: 27px;
    height: 33px;
    margin-right: 40px;
    margin-top: -4px;
}

.menu-app {
    font-size: 26.500px;
    font-weight: 700;
    margin-right: 41px;
    letter-spacing: -0.2px;
}

.menu-item {
    margin-right: 41px;
}

.menu-right {
    margin-left: auto;
    padding: 2px 37px 0 0;
    display: flex;
    align-items: center;
}

.st-num {
    font-size: 20px;
    font-weight: 700;
    text-anchor: middle;
    fill: #2a0a96;
}

.st-viber {
    margin-left: 34px;
}

.st-play {
    margin-left: 39px;
}

.st-bt {
    margin-left: 39px;
}

.st-percent {
    margin-left: 37px;
    font-size: 23px;
}

.st-battery {
    width: 48px;
    height: 26px;
    margin-left: 10px;
    border: 2px solid #b9b2e6;
    border-radius: 6px;
    padding: 2px;
}

.st-battery-fill {
    height: 100%;
    background: #e9e7f8;
    border-radius: 3px;
}

.st-wifi {
    margin-left: 37px;
}

.st-flag {
    width: 32px;
    height: 46px;
    margin-left: 40px;
    display: flex;
    flex-direction: column;
    margin-top: 4px;
}

.st-flag i {
    flex: 1;
}

.flag-w {
    background: #fff;
}

.flag-b {
    background: #0a1ae0;
}

.flag-r {
    background: #e6322a;
}

.st-search {
    margin-left: 41px;
}

.st-control {
    margin-left: 36px;
}

.st-siri {
    margin-left: 34px;
}

.st-date {
    margin-left: 33px;
    font-size: 26px;
}

.st-time {
    margin-left: 18px;
    font-size: 25px;
}

/* drive window behind the browser */
.drive-window {
    position: absolute;
    left: 0;
    top: 70px;
    width: 400px;
    height: 1563px;
    border-radius: 20px;
    overflow: hidden;
    background: white;
    color: #555;
}

.drive-title {
    height: 104px;
    background: #2c2b30;
    display: flex;
    gap: 16px;
    padding: 39px 0 0 40px;
}

.light {
    width: 24px;
    height: 24px;
    border-radius: 50%;
    background: #47464c;
}

.drive-tabbar {
    height: 56px;
    background: #1e1d22;
    padding: 11px 0 0 46px;
}

.drive-qt {
    width: 36px;
    height: 40px;
    border-radius: 8px;
    background: #5b5b5f;
    display: flex;
    align-items: center;
    justify-content: center;
}

.drive-qt i {
    border-left: 10px solid #2b2b2f;
    border-top: 7px solid transparent;
    border-bottom: 7px solid transparent;
}

.drive-body {
    height: 1403px;
    padding-top: 32px;
    position: relative;
}

.drive-logo {
    display: block;
    margin-left: 43px;
}

.drive-sep {
    height: 2px;
    background: #cfcfd1;
    margin-top: 32px;
}

.drive-new {
    width: 300px;
    height: 96px;
    margin: 26px 0 0 22px;
    border-radius: 48px;
    background: white;
    box-shadow: 0 3px 8px rgba(0, 0, 0, 0.35);
    padding: 24px 0 0 32px;
}

.drive-row {
    display: flex;
    align-items: center;
    margin-top: 44px;
}

.drive-arrow {
    margin-left: 28px;
}

.drive-icon {
    margin-left: 22px;
}

.drive-plain {
    display: block;
}

.drive-people {
    margin: 49px 0 0 56px;
}

.drive-clock {
    margin: 45px 0 0 58px;
}

.drive-star {
    margin: 41px 0 0 58px;
}

.drive-trash {
    margin: 44px 0 0 63px;
}

.drive-sep2 {
    margin-top: 38px;
}

.drive-cloud {
    margin: 39px 0 0 54px;
}

.drive-bar {
    width: 200px;
    height: 7px;
    margin: 39px 0 0 54px;
    border-radius: 4px;
    background: #2f66d0;
}

.drive-usage {
    margin: 15px 0 0 54px;
    font-family: "Liberation Sans", sans-serif;
    font-size: 26px;
    line-height: 30px;
    white-space: nowrap;
}

.drive-btn {
    width: 200px;
    height: 70px;
    margin: 28px 0 0 54px;
    border: 2px solid #cfcfd1;
    border-radius: 8px;
}

/* browser window */
.browser {
    position: absolute;
    left: 96px;
    top: 49px;
    width: 2781px;
    height: 1566px;
    display: flex;
    flex-direction: column;
    border-radius: 22px;
    overflow: hidden;
    background: white;
    border-top: 2px solid #0b0b14;
    border-left: 2px solid #0b0b14;
    box-shadow: -20px 0 50px rgba(0, 0, 0, 0.6), 0 2px 0 #0b0b14;
}

.tabstrip {
    height: 61px;
    background: #e2e3e6;
    display: flex;
    align-items: flex-start;
    font-family: Roboto, sans-serif;
    font-size: 21.500px;
    color: #45474a;
}

.tab {
    height: 58px;
    display: flex;
    align-items: center;
    white-space: nowrap;
}

.tab-first {
    width: 447px;
    padding: 0 20px 0 34px;
}

.tab-second {
    width: 433px;
    padding: 0 18px 0 20px;
    position: relative;
}

.tab-second::before {
    content: "";
    position: absolute;
    left: -1px;
    top: 12px;
    bottom: 12px;
    width: 2px;
    background: #a8a9ad;
}

.tab-active {
    width: 435px;
    margin-top: 3px;
    padding: 0 24px 6px 22px;
    background: white;
    border-radius: 16px 16px 0 0;
}

.tab-title {
    margin-left: 15px;
    flex: 1;
}

.tab-title-active {
    margin-left: 13px;
    font-size: 21px;
}

.tab-x {
    font-family: "Liberation Sans", sans-serif;
    font-size: 26px;
    font-weight: 700;
    color: #3c3c3c;
}

.tab-plus {
    margin: 17px 0 0 25px;
}

.win-controls {
    margin-left: auto;
    height: 58px;
    display: flex;
    align-items: center;
}

.win-chevron {
    margin-right: 66px;
}

.win-min {
    margin-right: 59px;
}

.win-restore {
    margin-right: 63px;
}

.win-close {
    margin-right: 28px;
}

.toolbar {
    height: 66px;
    display: flex;
    align-items: center;
    background: white;
    border-bottom: 2px solid #d4d5db;
    padding-left: 27px;
}

.tb-forward {
    margin-left: 35px;
}

.tb-reload {
    margin-left: 37px;
}

.omnibox {
    width: 2326px;
    height: 50px;
    margin-left: 28px;
    border-radius: 25px;
    background: #f3f4f6;
    display: flex;
    align-items: center;
    padding-left: 23px;
}

.url {
    margin-left: 21px;
    font-family: Roboto, sans-serif;
    font-size: 25px;
    color: #6b6d70;
    white-space: nowrap;
}

.url-host {
    font-weight: 400;
    color: #202124;
}

.om-share {
    margin-left: auto;
}

.om-star {
    margin: 0 13px 0 32px;
}

.tb-ext {
    margin-left: 28px;
}

.tb-cast {
    margin-left: 27px;
}

.tb-avatar {
    width: 41px;
    height: 41px;
    margin-left: 23px;
    border-radius: 50%;
    background: #e8722a;
    color: white;
    font-family: Roboto, sans-serif;
    font-size: 21px;
    display: flex;
    align-items: center;
    justify-content: center;
}

.tb-dots {
    margin-left: 35px;
    display: flex;
    flex-direction: column;
    gap: 6px;
}

.tb-dots i {
    width: 6px;
    height: 6px;
    border-radius: 50%;
    background: #5f6368;
}

.page {
    flex: 1;
    min-height: 0;
    display: flex;
}

.page-main {
    flex: 1;
    min-width: 0;
    display: flex;
    flex-direction: column;
}

.page-scroll {
    width: 28px;
    background: #f1f1f1;
    display: flex;
    flex-direction: column;
    align-items: flex-end;
    position: relative;
}

.arrow-up {
    border-left: 8px solid transparent;
    border-right: 8px solid transparent;
    border-bottom: 9px solid #4d4d4d;
}

.arrow-down {
    border-left: 8px solid transparent;
    border-right: 8px solid transparent;
    border-top: 9px solid #4d4d4d;
}

.page-scroll .arrow-up {
    margin: 13px 4px 0 0;
}

.page-thumb {
    width: 25px;
    height: 735px;
    margin-top: 541px;
    background: #858585;
}

.page-scroll .arrow-down {
    margin: 40px 4px 0 0;
}

/* gitlab nav */
.gl-nav {
    height: 73px;
    background: #2f3068;
    display: flex;
    align-items: center;
    padding-left: 24px;
    color: #d9daea;
}

.gl-name {
    margin-left: 16px;
    font-family: Roboto, sans-serif;
    font-size: 33px;
}

.gl-burger {
    margin-left: 47px;
}

.gl-menu {
    margin-left: 13px;
    font-family: Roboto, sans-serif;
    font-size: 23px;
    font-weight: 700;
    color: #cfd0e2;
}

.gl-right {
    margin-left: auto;
    display: flex;
    align-items: center;
    padding-right: 52px;
}

.gl-chev-add {
    margin-left: 15px;
}

.gl-search {
    width: 578px;
    height: 57px;
    margin-left: 30px;
    border: 2px solid #7e7eab;
    border-radius: 5px;
    background: #5b5a8a;
    display: flex;
    align-items: center;
    padding-left: 14px;
    font-family: Roboto, sans-serif;
    font-size: 25px;
    color: #c9c9dc;
}

.gl-search span {
    margin: 2px 0 0 6px;
}

.gl-issues {
    margin-left: 18px;
}

.gl-mr {
    margin-left: 47px;
}

.gl-chev-mr {
    margin-left: 13px;
}

.gl-todo {
    margin-left: 46px;
}

.gl-help {
    margin-left: 37px;
    position: relative;
    height: 36px;
}

.gl-help-dot {
    position: absolute;
    top: -9px;
    right: -14px;
    width: 16px;
    height: 16px;
    border-radius: 50%;
    background: #c9ccf4;
}

.gl-chev-help {
    margin-left: 17px;
}

.gl-avatar {
    margin-left: 43px;
}

.gl-chev-user {
    margin-left: 12px;
}

.gl-body {
    flex: 1;
    min-height: 0;
    display: flex;
}

/* sidebar */
.sidebar {
    width: 395px;
    flex-shrink: 0;
    display: flex;
    flex-direction: column;
    background: #f3f3f4;
    color: #5a5a5a;
    font-family: "Open Sans", sans-serif;
    font-size: 24px;
}

.side-scroll {
    height: 1206px;
    display: flex;
}

.side-nav {
    flex: 1;
    min-width: 0;
    overflow: hidden;
    padding: 15px 10px 0 5px;
}

.side-project {
    display: flex;
    align-items: center;
    margin-left: 9px;
    height: 58px;
}

.project-avatar {
    width: 55px;
    height: 58px;
    border: 1px solid #ececec;
    border-radius: 6px;
    background: #fbf7f5;
    display: flex;
    align-items: center;
    justify-content: center;
    color: #444;
    font-size: 24px;
}

.project-name {
    margin-left: 17px;
    color: #3a3a3a;
    font-weight: 600;
    font-size: 23px;
}

.side-list {
    list-style: none;
    margin: 15px 0 0;
    padding: 0;
}

.side-item {
    height: 58px;
    margin-bottom: 1.800px;
    padding-left: 66px;
    display: flex;
    align-items: center;
    position: relative;
    border-radius: 8px;
    white-space: nowrap;
    line-height: 28px;
}

.side-bold {
    font-weight: 600;
    color: #3e3e3e;
}

.side-active {
    background: #e3e3e7;
}

.side-icon {
    position: absolute;
    left: 22px;
    width: 28px;
    height: 28px;
}

.side-count {
    margin-left: auto;
    margin-right: 22px;
    width: 40px;
    height: 30px;
    border-radius: 15px;
    background: #d4e4f7;
    color: #4a7bb8;
    font-size: 20px;
    line-height: 30px;
    text-align: center;
}

.side-track {
    width: 26px;
    flex-shrink: 0;
    padding-right: 1px;
    display: flex;
    flex-direction: column;
    align-items: center;
}

.side-track .arrow-up {
    margin-top: 12px;
    border-bottom-color: #b8b8b8;
}

.side-thumb {
    width: 100%;
    height: 1089px;
    margin-top: 10px;
    background: #c4c4c4;
}

.side-collapse {
    flex: 1;
    border-top: 2px solid #e4e4e6;
    padding-left: 71px;
    display: flex;
    align-items: center;
    position: relative;
}

.side-collapse .side-icon {
    left: 28px;
    height: 24px;
}

/* file view */
.content {
    flex: 1;
    min-width: 0;
    background: white;
    padding-left: 48px;
}

.file-holder {
    width: 2262px;
    height: 1177px;
    background: #f0f0f0;
    border-right: 2px solid #e4e4e4;
    border-bottom: 2px solid #e8e8e8;
    padding-left: 271px;
}

.file-image {
    width: 1720px;
    height: 1123px;
    background: white;
    overflow: hidden;
}

.box-yellow {
    width: 791px;
    height: 399px;
    margin-left: 6px;
    border: 7px solid #ffe840;
    border-top: 0;
}

.box-black {
    width: 1681px;
    height: 137px;
    margin: 17px 0 0 8px;
    border: 6px solid #000;
    padding: 31px 0 0 39px;
}

.box-green {
    width: 729px;
    height: 74px;
    border: 6px solid #56a56b;
    padding: 2px 0 0 59px;
    display: flex;
    align-items: center;
}

.box-red {
    width: 887px;
    height: 542px;
    margin: 21px 0 0 25px;
    border: 6px solid #e04f42;
    padding: 0 0 26px 87px;
    display: flex;
    align-items: center;
}

.draw-text {
    font-family: "Open Sans", sans-serif;
    font-size: 30px;
    color: #14141a;
}

/* windows taskbar */
.taskbar {
    height: 72px;
    display: flex;
    align-items: center;
    background: linear-gradient(90deg, #e6e7ee 0, #e8e8ea 1000px, #dde0d6 1400px, #e0e4cf 1600px, #e6e2b8 1710px, #dfe3cb 1800px, #e3dfd8 2200px, #e8dfe3 2300px, #e6e6d6 2500px, #e2e3cc 100%);
    font-family: Roboto, sans-serif;
    color: #333;
}

.start {
    width: 86px;
    height: 100%;
    flex-shrink: 0;
    display: flex;
    align-items: center;
    padding-left: 27px;
}

.task-search {
    width: 622px;
    height: 70px;
    display: flex;
    align-items: center;
    padding-left: 21px;
    background: linear-gradient(180deg, #fdfdfd, #ebebeb);
    border: 1px solid #e4e4e4;
    font-size: 26px;
    color: #4a4a4a;
    white-space: nowrap;
}

.task-search span {
    margin-left: 21px;
}

.task-view {
    margin-left: 29px;
}

.task-opera {
    margin-left: 55px;
}

.task-slot {
    height: 100%;
    display: flex;
    align-items: center;
    justify-content: center;
    border-bottom: 5px solid #3a7ac8;
}

.slot-folder {
    width: 73px;
    margin-left: 31px;
}

.slot-chrome {
    width: 86px;
    margin-left: 9px;
    background: rgba(255, 255, 255, 0.5);
}

.slot-vs {
    width: 73px;
    margin-left: 12px;
}

.slot-zoom {
    width: 74px;
    margin-left: 16px;
}

.task-ch-text {
    font-size: 16px;
    font-weight: 700;
    fill: #fff;
    text-anchor: middle;
}

.task-tray {
    margin-left: auto;
    display: flex;
    align-items: center;
    padding-right: 42px;
}

.tray-text {
    font-size: 26px;
    color: #2b2b2b;
}

.tray-temp {
    margin-left: 18px;
}

.tray-cloudy {
    margin-left: 16px;
}

.tray-up {
    margin-left: 29px;
}

.tray-meet {
    margin-left: 19px;
}

.tray-mic {
    margin-left: 17px;
}

.tray-batt {
    margin-left: 23px;
}

.tray-wifi {
    margin-left: 15px;
}

.tray-sound {
    margin-left: 15px;
}

.tray-eng {
    margin-left: 20px;
    font-size: 23px;
}

.tray-clock {
    width: 104px;
    margin-left: 20px;
    display: flex;
    flex-direction: column;
    align-items: center;
    gap: 10px;
    font-size: 21px;
    line-height: 25px;
    color: #2b2b2b;
}

.tray-note {
    margin-left: 30px;
    position: relative;
    height: 38px;
}

.tray-badge {
    position: absolute;
    right: -14px;
    bottom: -16px;
    width: 30px;
    height: 30px;
    border: 2px solid #9a9a9a;
    border-radius: 50%;
    background: #e8e8e0;
    font-size: 22px;
    line-height: 26px;
    text-align: center;
    color: #222;
}

/* mac dock */
.dock {
    position: absolute;
    left: 188px;
    top: 1616px;
    width: 2505px;
    height: 173px;
    display: flex;
    align-items: flex-start;
    padding: 22px 0 0 19px;
    border: 2px solid rgba(255, 255, 255, 0.16);
    border-radius: 60px;
    background: linear-gradient(90deg, #2c213e 0, #1e1338 800px, #38165e 1300px, #4c1671 1700px, #2c1258 2200px, #24104a 100%);
}

.dock-item {
    width: 114px;
    margin-right: 38px;
    position: relative;
    display: flex;
    flex-direction: column;
    align-items: center;
}

.dock-icon {
    width: 114px;
    height: 116px;
    display: block;
}

.dock-dot {
    width: 8px;
    height: 8px;
    margin-top: 22px;
    border-radius: 50%;
    background: #c58aec;
}

.dock-dot.dim {
    background: #8b7ba8;
}

.dock-dot.none {
    background: transparent;
}

.dock-badge {
    position: absolute;
    top: -13px;
    right: -15px;
    width: 52px;
    height: 53px;
    border-radius: 50%;
    background: #e25141;
    color: white;
    font-family: Inter, sans-serif;
    font-size: 30px;
    line-height: 53px;
    text-align: center;
}

.cal-month {
    font-family: Inter, sans-serif;
    font-size: 23px;
    font-weight: 500;
    text-anchor: middle;
    fill: #fff;
}

.cal-day {
    font-family: Roboto, sans-serif;
    font-size: 68px;
    font-weight: 300;
    text-anchor: middle;
    fill: #222;
}

.term-text {
    font-family: "Liberation Mono", monospace;
    font-size: 40px;
    font-weight: 700;
    fill: #fff;
}

.dock-divider {
    width: 2px;
    height: 130px;
    margin: 0 36px 0 16px;
    background: rgba(255, 255, 255, 0.3);
}

.dock-thumb {
    width: 143px;
    height: 87px;
    margin-top: 14px;
    border: 3px solid #2a2a2a;
    border-top: 3px solid #ddd;
    border-bottom: 3px solid #888;
    background: #232323;
    padding: 5px 0 0 5px;
    overflow: hidden;
    white-space: nowrap;
    font-family: "Liberation Mono", monospace;
    font-size: 5px;
    color: #ccc;
}

.dock-trash {
    margin: -12px 0 0 29px;
}

.cursor {
    position: absolute;
    left: 2832px;
    top: 1005px;
}
```
